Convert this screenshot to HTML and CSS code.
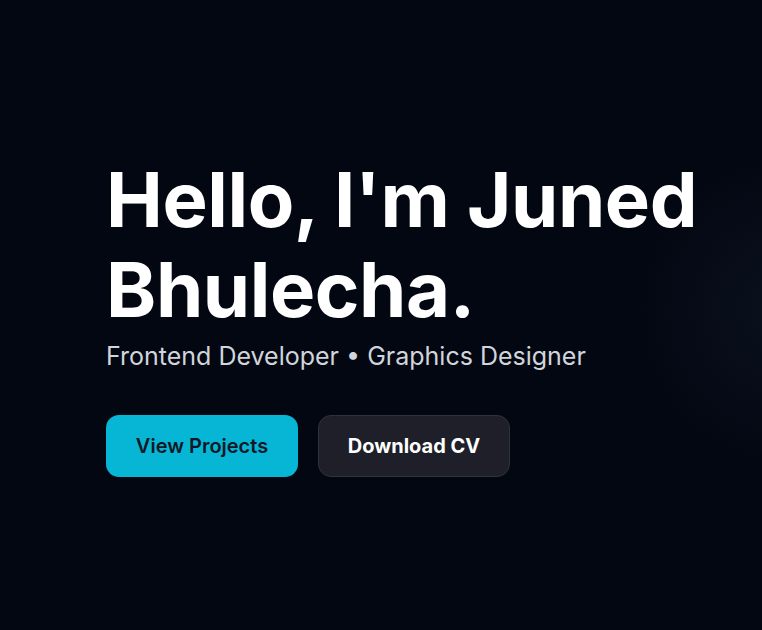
FILE: index.html
```html
<!DOCTYPE html>
<html lang="en">
<head>
<meta charset="utf-8">
<title>Juned Bhulecha</title>
<link rel="stylesheet" href="styles.css">
</head>
<body>
<main class="hero">
  <div class="glow"></div>
  <div class="content">
    <h1 class="title">Hello, I'm Juned<br>Bhulecha.</h1>
    <p class="subtitle">Frontend Developer • Graphics Designer</p>
    <div class="actions">
      <a class="btn btn-primary" href="#projects">View Projects</a>
      <a class="btn btn-secondary" href="#cv">Download CV</a>
    </div>
  </div>
</main>
</body>
</html>
```
FILE: styles.css
```css
* { box-sizing: border-box; }
html, body { margin: 0; padding: 0; }
body {
  background: #030712;
  font-family: Inter, "Noto Sans", sans-serif;
  color: #fff;
  overflow: hidden;
}
.hero {
  position: relative;
  width: 100%;
  height: 630px;
  display: flex;
  align-items: flex-start;
  padding: 154px 0 0 106px;
  overflow: hidden;
}
.glow {
  position: absolute;
  right: -170px;
  top: 150px;
  width: 300px;
  height: 320px;
  border-radius: 50%;
  background: radial-gradient(ellipse at center, rgba(30, 41, 59, 0.28), rgba(3, 7, 18, 0) 70%);
  pointer-events: none;
}
.content { position: relative; }
.title {
  margin: 0;
  font-size: 76px;
  line-height: 90px;
  font-weight: 700;
  letter-spacing: -0.4px;
  color: #fff;
}
.subtitle {
  margin: 4px 0 0;
  font-size: 25px;
  line-height: 36px;
  color: #d1d5db;
}
.actions {
  display: flex;
  gap: 20px;
  margin-top: 41px;
}
.btn {
  display: flex;
  align-items: center;
  justify-content: center;
  width: 192px;
  height: 62px;
  border-radius: 13px;
  font-size: 20px;
  text-decoration: none;
}
.btn-primary {
  background: #06b6d4;
  color: #111827;
  font-weight: 600;
}
.btn-secondary {
  background: #1e1f29;
  border: 1px solid #30323c;
  color: #fff;
  font-weight: 700;
}
```
